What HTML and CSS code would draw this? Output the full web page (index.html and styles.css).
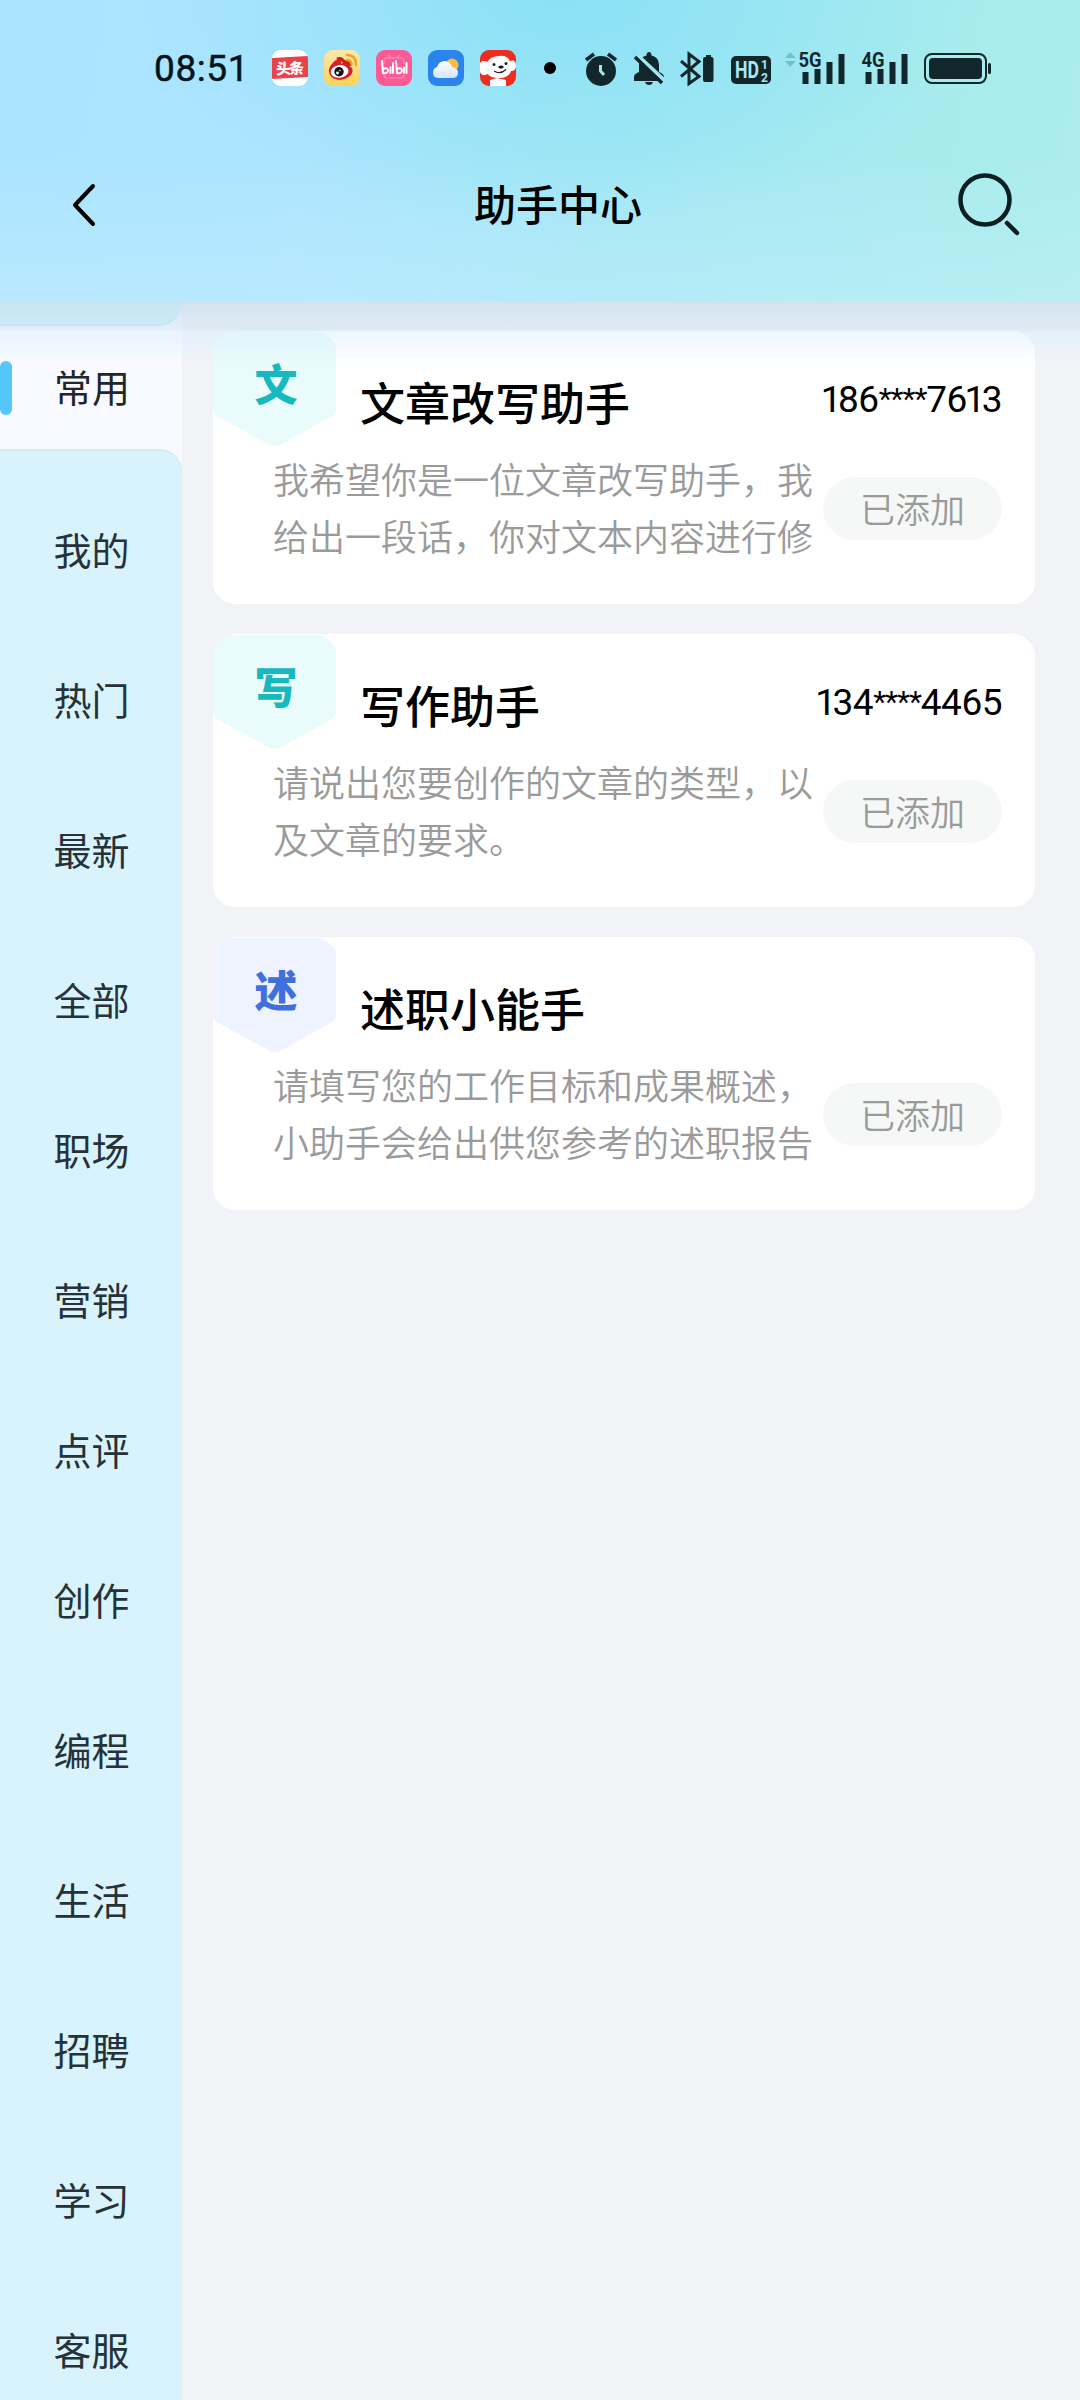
FILE: index.html
```html
<!DOCTYPE html>
<html lang="zh-CN">
<head>
<meta charset="utf-8">
<title>助手中心</title>
<link rel="stylesheet" href="styles.css">
</head>
<body>
<header class="header">
  <div class="status">
    <span class="time">08:51</span>
    <div class="apps">
      <svg width="36" height="36" viewBox="0 0 36 36"><defs><clipPath id="r"><rect width="36" height="36" rx="9"/></clipPath></defs><g clip-path="url(#r)"><rect width="36" height="36" fill="#fff"/><path d="M0 8L36 6V27L0 29Z" fill="#e8424a"/><text x="4" y="24" class="toutiao" textLength="28" transform="rotate(-2 18 18)">头条</text></g></svg>
      <svg width="36" height="36" viewBox="0 0 36 36"><defs><linearGradient id="wb" x2="0" y2="1"><stop stop-color="#fbe9ac"/><stop offset="1" stop-color="#fcd253"/></linearGradient></defs><rect width="36" height="36" rx="9" fill="url(#wb)"/><path d="M5 22C4 17 11 9 15 9C18 9 18 12 17 14C21 11 26 11 25 16C31 18 29 25 23 28C15 32 6 29 5 22Z" fill="#d3202a"/><path d="M13 9Q18 7 20 12Q25 11 26 16" fill="none" stroke="#c61f20" stroke-width="3"/><ellipse cx="15.500" cy="21.500" rx="9" ry="6.300" fill="#fff" transform="rotate(-8 15 21)"/><circle cx="15" cy="21.700" r="4.700" fill="#111"/><circle cx="13.500" cy="23" r="1.400" fill="#fff"/><circle cx="16" cy="20.500" r=".8" fill="#fff"/><path d="M23 5Q32 5 32 15M23 10Q27 10 27.500 14" fill="none" stroke="#e9a52c" stroke-width="2.400" stroke-linecap="round"/></svg>
      <svg width="36" height="36" viewBox="0 0 36 36"><rect width="36" height="36" rx="9" fill="#fb5a94"/><path d="M12 5L15 8M24 5L21 8M8 14V10Q8 8 11 8H25Q28 8 28 10V14M8 25Q8 28 11 28H25Q28 28 28 25" fill="none" stroke="#ff8db6" stroke-width="1.200"/><g fill="none" stroke="#fff" stroke-width="2" stroke-linecap="round"><path d="M6 11L7 23Q12 24 12 20Q11 17 7 19M14.500 17.500V23M17 13V23M20 11L21 23Q26 24 26 20Q25 17 21 19M28 17.500V23M30.500 13V23"/></g></svg>
      <svg width="36" height="36" viewBox="0 0 36 36"><defs><linearGradient id="cl" x2="0" y2="1"><stop stop-color="#fff"/><stop offset="1" stop-color="#d5e4fb"/></linearGradient></defs><rect width="36" height="36" rx="9" fill="#2b83ee"/><circle cx="24" cy="15" r="6.500" fill="#fbbd3c"/><path d="M11 28Q5 28 5 22.500Q5 18 9 17Q11 11 17 11Q22 11 24 17Q30 18 30 22.500Q30 28 24 28Z" fill="url(#cl)"/></svg>
      <svg width="36" height="36" viewBox="0 0 36 36"><g clip-path="url(#r)"><rect width="36" height="36" fill="#ed2d20"/><path d="M10 36V30L17 28L26 30V36Z" fill="#fff"/><path d="M7 12Q11 6 19 6Q27 5 30 11Q36 9 36 16Q36 21 31 21Q29 28 19 28Q10 28 8 24Q2 27 0 22V13Q3 9 7 12Z" fill="#fff"/><circle cx="14" cy="14.500" r="1.500" fill="#222"/><circle cx="26" cy="13.500" r="1.500" fill="#222"/><ellipse cx="21" cy="17" rx="2.700" ry="1.600" fill="#111"/><path d="M14 21Q20 25 26 19.500" fill="none" stroke="#222" stroke-width="1.300"/></g></svg>
    </div>
    <svg class="sys" width="460" height="44" viewBox="540 46 460 44">
      <circle cx="550" cy="68" r="6" fill="#000"/>
      <g fill="#12272b">
        <circle cx="601" cy="71" r="15"/>
        <path d="M586 60L594 54M616 60L608 54" stroke="#12272b" stroke-width="3.500"/>
        <path d="M600.500 65V71L604 75" fill="none" stroke="#a2e7f0" stroke-width="3"/>
        <path d="M646.500 55.500Q646.500 52 649 52Q651.500 52 651.500 55.500Q659 57 659 65V72Q664 74 664 77V81H634V77Q634 74 639 72V65Q639 57 646.500 55.500ZM645 82H653Q652 85 649 85Q646 85 645 82Z"/>
        <path d="M637 55L665 81" stroke="#a0e7f2" stroke-width="4"/><path d="M635 57L662 83" fill="none" stroke="#12272b" stroke-width="3.500"/>
        <path d="M681 61L699 76.500L689 83.500V54L699 61.500L681 76.500" fill="none" stroke="#12272b" stroke-width="3"/>
        <rect x="703" y="57" width="10.500" height="25" rx="2"/><rect x="706" y="55" width="5" height="3"/>
        <rect x="731" y="56" width="40" height="28" rx="5"/>
        <text class="hd" x="735" y="78" textLength="24" lengthAdjust="spacingAndGlyphs">HD</text><text class="hdn" x="761" y="69">1</text><text class="hdn" x="761" y="81.500">2</text>
        <path d="M785 58L790 52L796 58ZM785 61L790 67L796 61Z" fill="#78bfc8"/>
        <text class="net" x="798.500" y="67" textLength="23" lengthAdjust="spacingAndGlyphs">5G</text>
        <path d="M802.500 72H808.500V84H802.500ZM814.500 69H820.500V84H814.500ZM826.500 62H832.500V84H826.500ZM838.500 54H844.500V84H838.500Z"/>
        <text class="net" x="861.500" y="67" textLength="23" lengthAdjust="spacingAndGlyphs">4G</text>
        <path d="M865.500 72H871.500V84H865.500ZM877.500 69H883.500V84H877.500ZM889.500 62H895.500V84H889.500ZM901.500 54H907.500V84H901.500Z"/>
        <rect x="925" y="54" width="61" height="29" rx="7" fill="none" stroke="#12272b" stroke-width="2"/><rect x="929" y="58" width="53" height="21" rx="4"/><rect x="988" y="63" width="3" height="11" rx="1.500"/>
      </g>
    </svg>
  </div>
  <nav class="nav">
    <svg width="26" height="44" viewBox="0 0 26 44"><path d="M23 3L5 22L23 41" fill="none" stroke="#000" stroke-width="4" stroke-linecap="round" stroke-linejoin="round"/></svg>
    <h1 class="title">助手中心</h1>
    <svg width="66" height="66" viewBox="0 0 66 66"><circle cx="30" cy="28" r="24.500" fill="none" stroke="#0b1f22" stroke-width="4.500"/><path d="M52 51L62 61" stroke="#0b1f22" stroke-width="4.500" stroke-linecap="round"/></svg>
  </nav>
</header>
<div class="main">
  <aside class="side">
    <div class="side-top"></div>
    <div class="active">常用</div>
    <div class="menu">
      <div class="item">我的</div><div class="item">热门</div><div class="item">最新</div><div class="item">全部</div><div class="item">职场</div><div class="item">营销</div><div class="item">点评</div><div class="item">创作</div><div class="item">编程</div><div class="item">生活</div><div class="item">招聘</div><div class="item">学习</div><div class="item">客服</div>
    </div>
  </aside>
  <main class="cards">
    <section class="card">
      <div class="head"><div class="badge teal"><span>文</span></div><h2 class="name">文章改写助手</h2><span class="phone"><span class="one">1</span>86<span class="mask">****</span>7<span class="pair">6</span><span class="one">1</span>3</span></div>
      <div class="body"><p class="desc">我希望你是一位文章改写助手，我<br>给出一段话，你对文本内容进行修</p><span class="pill">已添加</span></div>
    </section>
    <section class="card">
      <div class="head"><div class="badge teal"><span>写</span></div><h2 class="name">写作助手</h2><span class="phone"><span class="one">1</span>34<span class="mask">****</span>4465</span></div>
      <div class="body"><p class="desc">请说出您要创作的文章的类型，以<br>及文章的要求。</p><span class="pill">已添加</span></div>
    </section>
    <section class="card">
      <div class="head"><div class="badge blue"><span>述</span></div><h2 class="name">述职小能手</h2></div>
      <div class="body"><p class="desc">请填写您的工作目标和成果概述，<br>小助手会给出供您参考的述职报告</p><span class="pill">已添加</span></div>
    </section>
  </main>
  <div class="fade"></div>
</div>
</body>
</html>
```
FILE: styles.css
```css
* { box-sizing: border-box; margin: 0; padding: 0; }
body { width: 1080px; height: 2400px; overflow: hidden; background: #f1f3f7; font-family: "Noto Sans CJK SC", sans-serif; color: #000; }
svg { display: block; flex: none; }
.header {
  height: 301px;
  background:
    radial-gradient(ellipse 420px 230px at 560px 0, rgba(130, 223, 245, .75), rgba(130, 223, 245, 0)),
    linear-gradient(rgba(255, 255, 255, 0) 50%, rgba(205, 238, 255, .4)),
    linear-gradient(100deg, #aae4ff 0%, #ace5fe 30%, #a4e8f4 58%, #a8ecec 88%, #abeeed 100%);
}
.status { height: 136px; display: flex; align-items: center; padding-left: 154px; }
.time { width: 118px; padding-top: 1px; font: 400 37px/44px Roboto, sans-serif; letter-spacing: .6px; color: #03141a; -webkit-text-stroke: .5px #03141a; }
.apps { display: flex; gap: 16px; width: 268px; }
.toutiao { font: 900 15px "Noto Sans CJK SC", sans-serif; fill: #fff; }
.hd { font: 700 23px Roboto, sans-serif; fill: #a8e9f0; }
.hdn { font: 700 12px Roboto, sans-serif; fill: #a8e9f0; }
.net { font: 700 21px Roboto, sans-serif; }
.nav { height: 138px; display: flex; align-items: center; justify-content: space-between; padding: 0 59px 0 70px; }
.title { font-size: 42px; line-height: 60px; font-weight: 500; margin-left: 65px; padding-bottom: 4px; }
.main { position: relative; display: flex; height: 2099px; overflow: hidden; }
.side { width: 182px; flex: none; font-size: 38px; color: #263238; text-align: center; background: #f8faff; }
.side-top { height: 25px; background: #d9f3fd; border-bottom: 2px solid #cfe9f8; border-bottom-right-radius: 24px; }
.active { height: 123px; color: #20272b; display: flex; align-items: center; line-height: 60px; padding-bottom: 3px; }
.active::before { content: ""; width: 12px; height: 54px; margin-right: 42px; margin-top: 3px; border-radius: 6px; background: #55c6f7; }
.menu { height: 1951px; padding-top: 27px; background: #d9f3fd; border-top: 2px solid #d0ebf6; border-right: 1px solid #d3edf8; border-top-right-radius: 22px; }
.item { height: 150px; line-height: 142px; padding-left: 2px; }
.cards { flex: 1; display: flex; flex-direction: column; gap: 30px; padding: 30px 45px 0 31px; }
.card { height: 273px; flex: none; border-radius: 22px; background: #fff; overflow: hidden; }
.head { height: 119px; display: flex; }
.badge { width: 123px; height: 116px; flex: none; padding-left: 3px; text-align: center; font-size: 43px; line-height: 102px; font-weight: 900; clip-path: path("M0 1H104Q109 1 113 4L119 9Q123 12 123 18V79Q123 82 119 85L69 113Q62 117 55 113L4 85Q0 82 0 79Z"); }
.teal { background: #e9fbfa; color: #18b8bf; }
.blue { background: #eef3ff; color: #3f70de; }
.name { flex: 1; padding-left: 24px; font-size: 45px; line-height: 141px; font-weight: 500; white-space: nowrap; }
.phone { padding-right: 33px; font: 400 37px/137px Roboto, sans-serif; letter-spacing: -.5px; }
.one { letter-spacing: -3.500px; }
.pair { letter-spacing: -3px; }
.mask { font-size: 30px; letter-spacing: -1px; vertical-align: 3px; line-height: 1; }
.body { display: flex; padding: 0 33px 0 60px; justify-content: space-between; }
.desc { font-size: 36px; line-height: 57px; color: #9a9a9a; font-weight: 350; white-space: nowrap; }
.pill { width: 179px; height: 63px; margin-top: 27px; flex: none; border-radius: 32px; background: #f6f8f8; color: #9a9a9a; font-size: 35px; line-height: 62px; text-align: center; font-weight: 350; }
.fade { position: absolute; left: 0; top: 0; right: 0; height: 62px; background: linear-gradient(rgba(178, 212, 230, .5), rgba(195, 222, 240, .42) 45%, rgba(215, 238, 255, .5) 50%, rgba(235, 243, 255, 0)); }
```
